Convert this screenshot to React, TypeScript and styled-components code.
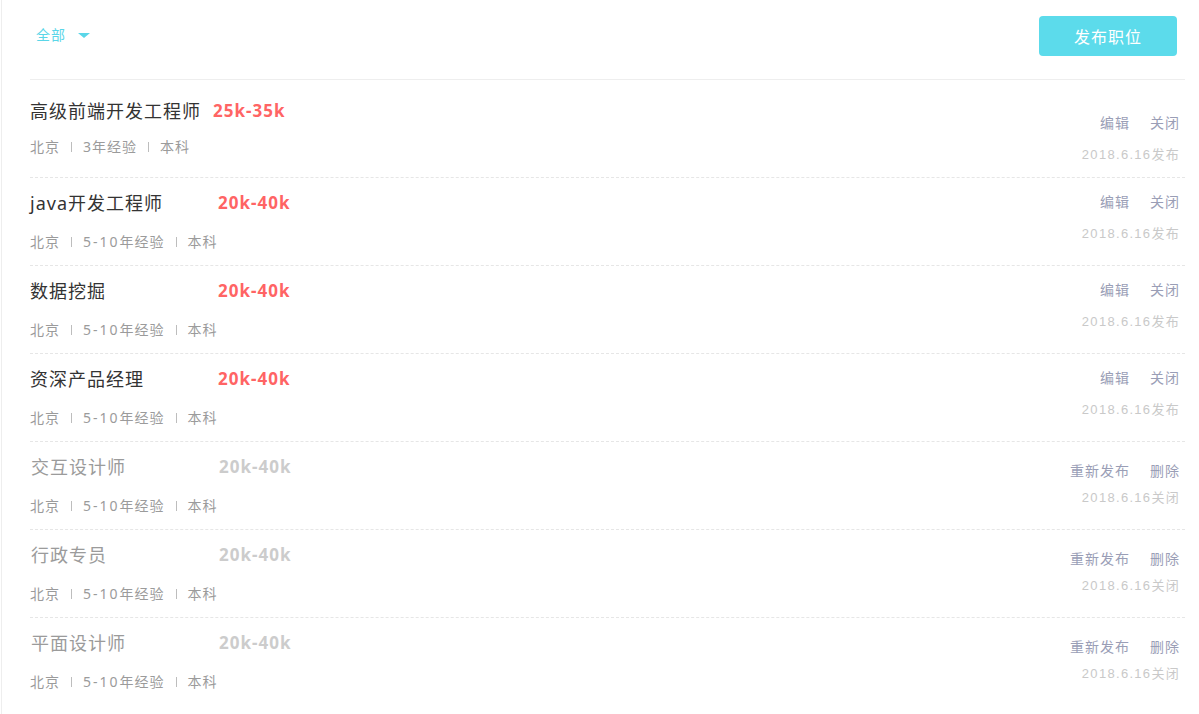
import React from "react";
import styled, { createGlobalStyle } from "styled-components";

const GlobalStyle = createGlobalStyle`
  html, body { margin: 0; padding: 0; background: #fff; }
  body {
    font-family: "Noto Sans", "Noto Sans CJK SC", sans-serif;
    letter-spacing: 1px;
  }
  * { box-sizing: border-box; }
`;

const Page = styled.div`
  margin-left: 1px;
  border-left: 1px solid #eeeeee;
  padding: 0 14px 0 28px;
  min-height: 714px;
`;

const Header = styled.div`
  display: flex;
  align-items: center;
  justify-content: space-between;
  padding: 16px 8px 23px 6px;
  border-bottom: 1px solid #eeeeee;
`;

const Filter = styled.div`
  display: flex;
  align-items: center;
  gap: 12px;
  color: #5ad6e8;
  font-size: 14px;
  line-height: 20px;
  margin-top: -2px;
  cursor: pointer;
`;

const Caret = styled.span`
  width: 0;
  height: 0;
  border-left: 6px solid transparent;
  border-right: 6px solid transparent;
  border-top: 5px solid #5ad6e8;
`;

const PublishButton = styled.button`
  width: 138px;
  height: 40px;
  border: none;
  border-radius: 4px;
  background: #5cdbeb;
  color: #ffffff;
  font-family: "Noto Sans", "Noto Sans CJK SC", sans-serif;
  font-size: 16px;
  letter-spacing: 1px;
  cursor: pointer;
`;

const Row = styled.div<{ $first?: boolean }>`
  display: flex;
  justify-content: space-between;
  height: ${(p) => (p.$first ? 98 : 88)}px;
  border-bottom: 1px dashed #e6e6e6;
  &:last-child {
    border-bottom: none;
  }
`;

const Left = styled.div<{ $first?: boolean }>`
  display: flex;
  flex-direction: column;
  padding-top: ${(p) => (p.$first ? 18 : 12)}px;
  gap: ${(p) => (p.$first ? 13 : 16)}px;
`;

const TitleLine = styled.div`
  display: flex;
  align-items: center;
  height: 26px;
`;

const Title = styled.span<{ $closed?: boolean; $wide?: boolean }>`
  font-size: 18px;
  line-height: 26px;
  color: ${(p) => (p.$closed ? "#9b9b9b" : "#333333")};
  min-width: ${(p) => (p.$wide ? "0" : "188px")};
  margin-right: ${(p) => (p.$wide ? "12px" : "0")};
  padding-left: ${(p) => (p.$closed ? "1px" : "0")};
`;

const Salary = styled.span<{ $closed?: boolean }>`
  font-family: "Noto Sans", sans-serif;
  font-weight: 700;
  font-size: 17px;
  line-height: 26px;
  letter-spacing: 1px;
  color: ${(p) => (p.$closed ? "#cccccc" : "#ff6464")};
  padding-left: ${(p) => (p.$closed ? "1px" : "0")};
`;

const Meta = styled.div`
  display: flex;
  align-items: center;
  font-size: 14px;
  line-height: 20px;
  color: #9b9b9b;
`;

const Latin = styled.span`
  letter-spacing: 2px;
`;

const Sep = styled.span`
  display: inline-block;
  width: 1px;
  height: 10px;
  background: #bdbdbd;
  margin: 0 11px;
`;

const Right = styled.div<{ $top: number; $gap: number }>`
  display: flex;
  flex-direction: column;
  align-items: flex-end;
  padding-top: ${(p) => p.$top}px;
  padding-right: 5px;
  gap: ${(p) => p.$gap}px;
`;

const Actions = styled.div`
  display: flex;
  gap: 20px;
`;

const ActionLink = styled.a`
  font-size: 14px;
  line-height: 20px;
  color: #9a9eb6;
  cursor: pointer;
`;

const DateText = styled.div`
  font-family: "Liberation Sans", "Noto Sans CJK SC", sans-serif;
  font-size: 13px;
  line-height: 18px;
  letter-spacing: 1.3px;
  color: #c9c9c9;
`;

type Job = {
  title: string;
  salary: string;
  years: string;
  closed?: boolean;
};

const jobs: Job[] = [
  { title: "高级前端开发工程师", salary: "25k-35k", years: "3" },
  { title: "java开发工程师", salary: "20k-40k", years: "5-10" },
  { title: "数据挖掘", salary: "20k-40k", years: "5-10" },
  { title: "资深产品经理", salary: "20k-40k", years: "5-10" },
  { title: "交互设计师", salary: "20k-40k", years: "5-10", closed: true },
  { title: "行政专员", salary: "20k-40k", years: "5-10", closed: true },
  { title: "平面设计师", salary: "20k-40k", years: "5-10", closed: true },
];

export default function App() {
  return (
    <>
      <GlobalStyle />
      <Page>
        <Header>
          <Filter>
            全部
            <Caret />
          </Filter>
          <PublishButton>发布职位</PublishButton>
        </Header>
        {jobs.map((job, i) => {
          const first = i === 0;
          return (
            <Row key={job.title} $first={first}>
              <Left $first={first}>
                <TitleLine>
                  <Title $closed={job.closed} $wide={first}>
                    {job.title}
                  </Title>
                  <Salary $closed={job.closed}>{job.salary}</Salary>
                </TitleLine>
                <Meta>
                  北京
                  <Sep />
                  {job.years.length > 1 ? <Latin>{job.years}</Latin> : job.years}
                  年经验
                  <Sep />
                  本科
                </Meta>
              </Left>
              <Right
                $top={first ? 33 : job.closed ? 19 : 14}
                $gap={job.closed ? 8 : 13}
              >
                <Actions>
                  {job.closed ? (
                    <>
                      <ActionLink>重新发布</ActionLink>
                      <ActionLink>删除</ActionLink>
                    </>
                  ) : (
                    <>
                      <ActionLink>编辑</ActionLink>
                      <ActionLink>关闭</ActionLink>
                    </>
                  )}
                </Actions>
                <DateText>2018.6.16{job.closed ? "关闭" : "发布"}</DateText>
              </Right>
            </Row>
          );
        })}
      </Page>
    </>
  );
}
